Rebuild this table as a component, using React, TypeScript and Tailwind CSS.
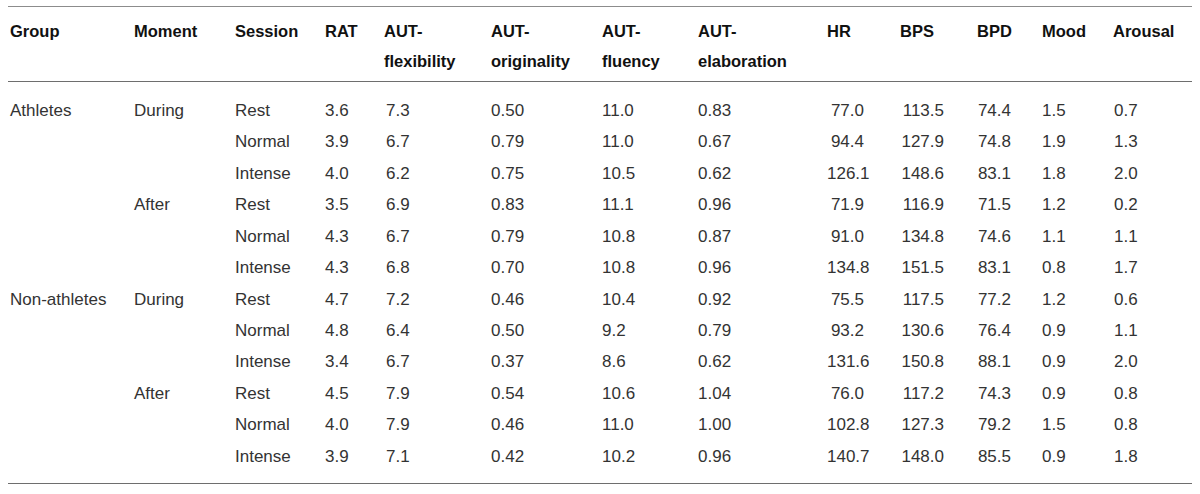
import React from "react";

const rows: string[][] = [
  ["Athletes", "During", "Rest", "3.6", "7.3", "0.50", "11.0", "0.83", "77.0", "113.5", "74.4", "1.5", "0.7"],
  ["", "", "Normal", "3.9", "6.7", "0.79", "11.0", "0.67", "94.4", "127.9", "74.8", "1.9", "1.3"],
  ["", "", "Intense", "4.0", "6.2", "0.75", "10.5", "0.62", "126.1", "148.6", "83.1", "1.8", "2.0"],
  ["", "After", "Rest", "3.5", "6.9", "0.83", "11.1", "0.96", "71.9", "116.9", "71.5", "1.2", "0.2"],
  ["", "", "Normal", "4.3", "6.7", "0.79", "10.8", "0.87", "91.0", "134.8", "74.6", "1.1", "1.1"],
  ["", "", "Intense", "4.3", "6.8", "0.70", "10.8", "0.96", "134.8", "151.5", "83.1", "0.8", "1.7"],
  ["Non-athletes", "During", "Rest", "4.7", "7.2", "0.46", "10.4", "0.92", "75.5", "117.5", "77.2", "1.2", "0.6"],
  ["", "", "Normal", "4.8", "6.4", "0.50", "9.2", "0.79", "93.2", "130.6", "76.4", "0.9", "1.1"],
  ["", "", "Intense", "3.4", "6.7", "0.37", "8.6", "0.62", "131.6", "150.8", "88.1", "0.9", "2.0"],
  ["", "After", "Rest", "4.5", "7.9", "0.54", "10.6", "1.04", "76.0", "117.2", "74.3", "0.9", "0.8"],
  ["", "", "Normal", "4.0", "7.9", "0.46", "11.0", "1.00", "102.8", "127.3", "79.2", "1.5", "0.8"],
  ["", "", "Intense", "3.9", "7.1", "0.42", "10.2", "0.96", "140.7", "148.0", "85.5", "0.9", "1.8"],
];

const headers: string[][] = [
  ["Group"],
  ["Moment"],
  ["Session"],
  ["RAT"],
  ["AUT-", "flexibility"],
  ["AUT-", "originality"],
  ["AUT-", "fluency"],
  ["AUT-", "elaboration"],
  ["HR"],
  ["BPS"],
  ["BPD"],
  ["Mood"],
  ["Arousal"],
];

const headerCls = [
  "pl-[2px]", "", "", "", "", "", "", "", "", "", "", "", "",
];

const dataCls = [
  "pl-[2px] text-left",
  "text-left",
  "text-left",
  "text-left",
  "text-left pl-[2px]",
  "text-left",
  "text-left",
  "text-left",
  "text-right pr-[36px]",
  "text-right pr-[33px]",
  "text-right pr-[31px]",
  "text-left",
  "text-left pl-[1px]",
];

const grid =
  "grid grid-cols-[126px_101px_90px_59px_107px_111px_96px_129px_73px_77px_65px_71px_79px]";

export default function App() {
  return (
    <div
      className="w-[1200px] h-[494px] bg-white px-2 pt-[6px]"
      style={{ fontFamily: '"Liberation Sans", Arial, sans-serif' }}
    >
      <div className="h-px bg-[#8c8c8c]" />
      <div className={`${grid} pt-[9px] pb-[5px] text-[16.5px] font-bold leading-[30px] text-[#111]`}>
        {headers.map((h, i) => (
          <div key={i} className={headerCls[i]}>
            {h.map((line, j) => (
              <div key={j}>{line}</div>
            ))}
          </div>
        ))}
      </div>
      <div className="h-px bg-[#6e6e6e]" />
      <div className="pt-[13px] pb-[11px] text-[17px] text-[#333]">
        {rows.map((r, i) => (
          <div key={i} className={`${grid} h-[31.45px] items-center`}>
            {r.map((c, j) => (
              <div key={j} className={dataCls[j]}>
                {c}
              </div>
            ))}
          </div>
        ))}
      </div>
      <div className="h-px bg-[#6e6e6e]" />
    </div>
  );
}
